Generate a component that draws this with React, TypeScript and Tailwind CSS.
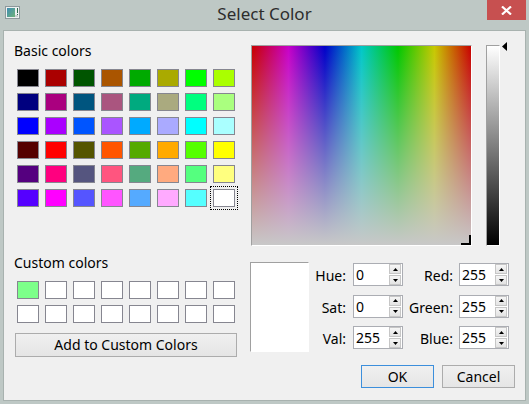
import React from 'react';

const basicColors = [
  ['bg-[#000000]', 'bg-[#aa0000]', 'bg-[#005500]', 'bg-[#aa5500]', 'bg-[#00aa00]', 'bg-[#aaaa00]', 'bg-[#00ff00]', 'bg-[#aaff00]'],
  ['bg-[#00007f]', 'bg-[#aa007f]', 'bg-[#00557f]', 'bg-[#aa557f]', 'bg-[#00aa7f]', 'bg-[#aaaa7f]', 'bg-[#00ff7f]', 'bg-[#aaff7f]'],
  ['bg-[#0000ff]', 'bg-[#aa00ff]', 'bg-[#0055ff]', 'bg-[#aa55ff]', 'bg-[#00aaff]', 'bg-[#aaaaff]', 'bg-[#00ffff]', 'bg-[#aaffff]'],
  ['bg-[#550000]', 'bg-[#ff0000]', 'bg-[#555500]', 'bg-[#ff5500]', 'bg-[#55aa00]', 'bg-[#ffaa00]', 'bg-[#55ff00]', 'bg-[#ffff00]'],
  ['bg-[#55007f]', 'bg-[#ff007f]', 'bg-[#55557f]', 'bg-[#ff557f]', 'bg-[#55aa7f]', 'bg-[#ffaa7f]', 'bg-[#55ff7f]', 'bg-[#ffff7f]'],
  ['bg-[#5500ff]', 'bg-[#ff00ff]', 'bg-[#5555ff]', 'bg-[#ff55ff]', 'bg-[#55aaff]', 'bg-[#ffaaff]', 'bg-[#55ffff]', 'bg-[#ffffff]'],
];

const customColors = [
  ['bg-[#7dff8a]', 'bg-white', 'bg-white', 'bg-white', 'bg-white', 'bg-white', 'bg-white', 'bg-white'],
  ['bg-white', 'bg-white', 'bg-white', 'bg-white', 'bg-white', 'bg-white', 'bg-white', 'bg-white'],
];

function Well({ color, focused }: { color: string; focused?: boolean }) {
  return (
    <div className={focused ? 'h-[24px] w-[28px] border border-dotted border-black p-[2px]' : 'h-[24px] w-[28px] p-[3px]'}>
      <div className={`h-full w-full border border-[#868690] ${color}`} />
    </div>
  );
}

function SpinArrow({ up }: { up?: boolean }) {
  return (
    <div className="flex h-[10px] items-center justify-center border border-[#c6c6c6] bg-[linear-gradient(to_bottom,#f6f6f6,#e3e3e3)]">
      <svg width="5" height="3" viewBox="0 0 5 3">
        <path d={up ? 'M2.5 0 L5 3 L0 3 Z' : 'M0 0 L5 0 L2.5 3 Z'} fill="#000" />
      </svg>
    </div>
  );
}

function Spin({ value }: { value: string }) {
  return (
    <div className="flex h-[23px] w-[50px] border border-[#abadb3] bg-white">
      <div className="flex-1 pl-[2px] pt-[1px] leading-[20px]">{value}</div>
      <div className="mr-[1px] flex w-[12px] flex-col gap-[1px]">
        <SpinArrow up />
        <SpinArrow />
      </div>
    </div>
  );
}

function Label({ text }: { text: string }) {
  return <div className="h-[23px] pt-[2px] text-right leading-[21px]">{text}</div>;
}

export default function App() {
  return (
    <div className="h-[404px] w-[529px] bg-[#bec8c5] font-['Noto_Sans',sans-serif] text-black">
      {/* title bar */}
      <div className="grid h-[30px] grid-cols-[1fr_auto_1fr]">
        <div className="pl-[5px] pt-[6px]">
          <svg width="15" height="13" viewBox="0 0 15 13">
            <defs>
              <linearGradient id="ic" x1="0" y1="0" x2="1" y2="1">
                <stop offset="0" stopColor="#3f8db3" />
                <stop offset="1" stopColor="#6fb27a" />
              </linearGradient>
            </defs>
            <rect x="0.5" y="0.5" width="14" height="12" fill="#eef1f1" stroke="#8d989b" />
            <rect x="2" y="2" width="8" height="9" fill="url(#ic)" />
            <rect x="12" y="2" width="1" height="5" fill="#2f6d4f" />
            <rect x="12" y="8" width="1" height="1" fill="#2f6d4f" />
            <rect x="10" y="9" width="3" height="2" fill="#c9cfcf" />
          </svg>
        </div>
        <div className="pt-[2px] text-[17px] leading-[23px] text-[#2d2d2d]">Select Color</div>
        <div className="flex justify-end pr-[3px]">
          <div className="flex h-[20px] w-[39px] items-center justify-center bg-[#c75050]">
            <svg width="11" height="9" viewBox="0 0 11 9">
              <path d="M1 0.5 L10 8.5 M10 0.5 L1 8.5" stroke="#fff" strokeWidth="2.2" />
            </svg>
          </div>
        </div>
      </div>

      {/* client area */}
      <div className="mx-[3px] h-[371px] border border-[#a8b2af] bg-[#f0f0f0] text-[14px]">
        <div className="flex pl-[10px]">
          {/* left column */}
          <div className="flex w-[224px] flex-col pt-[10px]">
            <div className="h-[20px] leading-[20px]">Basic colors</div>
            <div className="mt-[5px] grid grid-cols-8">
              {basicColors.map((row, r) =>
                row.map((c, i) => <Well key={`${r}-${i}`} color={c} focused={r === 5 && i === 7} />)
              )}
            </div>
            <div className="mt-[43px] h-[20px] leading-[20px]">Custom colors</div>
            <div className="mt-[5px] grid grid-cols-8">
              {customColors.map((row, r) => row.map((c, i) => <Well key={`${r}-${i}`} color={c} />))}
            </div>
            <div className="ml-[1px] mt-[7px] h-[24px] w-[222px] border border-[#acacac] bg-[linear-gradient(to_bottom,#f0f0f0,#e5e5e5)] text-center leading-[22px]">
              Add to Custom Colors
            </div>
          </div>

          {/* right column */}
          <div className="ml-[12px] flex flex-col pt-[14px]">
            <div className="flex">
              <div className="relative ml-[1px] h-[201px] w-[221px] border border-l-[#a0a0a0] border-t-[#a0a0a0] border-r-white border-b-white bg-[linear-gradient(to_right,#c80000,#c800c8,#0000c8,#00c8c8,#00c800,#c8c800,#c80000)]">
                <div className="h-full w-full bg-[linear-gradient(to_bottom,rgba(200,200,200,0),#c8c8c8)]" />
                <div className="absolute bottom-0 right-0 h-[10px] w-[2px] bg-black" />
                <div className="absolute bottom-0 right-0 h-[2px] w-[10px] bg-black" />
              </div>
              <div className="relative ml-[14px] h-[201px] w-[14px] border border-l-[#a0a0a0] border-t-[#a0a0a0] border-r-white border-b-white bg-[linear-gradient(to_bottom,#ffffff,#000000)]">
                <svg className="absolute left-[15px] top-[-4px]" width="5" height="9" viewBox="0 0 5 9">
                  <path d="M0 4.5 L5 0 L5 9 Z" fill="#000" />
                </svg>
              </div>
            </div>

            <div className="mt-[16px] flex">
              <div className="h-[90px] w-[59px] border border-l-[#a0a0a0] border-t-[#a0a0a0] border-r-white border-b-white bg-white" />
              <div className="mt-[1px] grid grid-cols-[37px_57px_50px_56px] gap-y-[6px]">
                <Label text="Hue:" />
                <div className="pl-[7px]"><Spin value="0" /></div>
                <Label text="Red:" />
                <div className="pl-[6px]"><Spin value="255" /></div>

                <Label text="Sat:" />
                <div className="pl-[7px]"><Spin value="0" /></div>
                <Label text="Green:" />
                <div className="pl-[6px]"><Spin value="255" /></div>

                <Label text="Val:" />
                <div className="pl-[7px]"><Spin value="255" /></div>
                <Label text="Blue:" />
                <div className="pl-[6px]"><Spin value="255" /></div>
              </div>
            </div>
          </div>
        </div>

        {/* dialog buttons */}
        <div className="mt-[8px] flex justify-end gap-[8px] pr-[10px]">
          <div className="h-[23px] w-[73px] border border-[#3c8fdc] bg-[linear-gradient(to_bottom,#f0f0f0,#e5e5e5)] text-center leading-[21px]">
            OK
          </div>
          <div className="h-[23px] w-[73px] border border-[#acacac] bg-[linear-gradient(to_bottom,#f0f0f0,#e5e5e5)] text-center leading-[21px]">
            Cancel
          </div>
        </div>
      </div>
    </div>
  );
}
